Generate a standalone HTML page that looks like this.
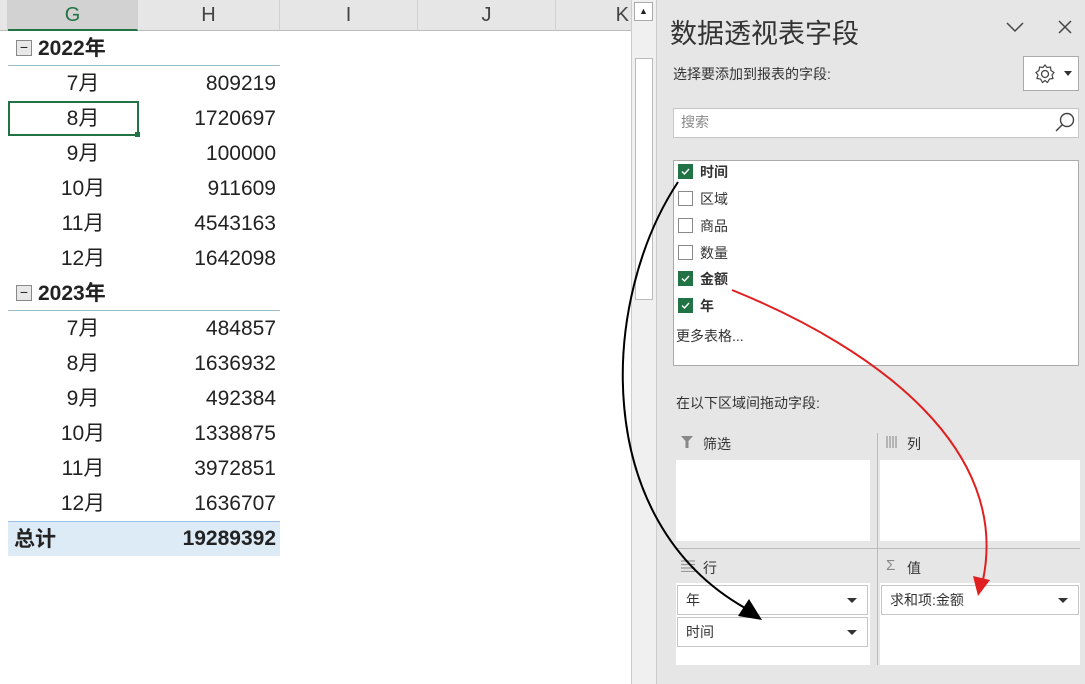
<!DOCTYPE html>
<html><head><meta charset="utf-8"><style>
*{box-sizing:border-box;margin:0;padding:0}
body{width:1085px;height:684px;position:relative;overflow:hidden;background:#fff;font-family:"Liberation Sans","Noto Sans CJK SC",sans-serif;color:#222}
.a{position:absolute}
.hdr{top:0;height:31px;background:#e6e6e6;border-bottom:1px solid #bdbdbd;font-size:20px;color:#444;text-align:center;line-height:31px;border-right:1px solid #d0d0d0}
.r{position:absolute;height:35px;line-height:35px;font-size:21px;color:#222}
.m{left:8px;width:130px;text-align:center;padding-left:20px}
.v{left:138px;width:138px;text-align:right}
.pane{left:657px;top:0;width:428px;height:684px;background:#e6e6e6}
.cb{position:absolute;left:678px;width:15px;height:15px;border:1px solid #8a8a8a;background:#fff}
.ck{background:#217346;border-color:#217346}
.fl{position:absolute;left:700px;font-size:14px;color:#333}
.box{position:absolute;background:#fff}
.it{position:absolute;background:#fff;border:1px solid #c6c6c6;font-size:14px;line-height:28px;padding-left:8px;color:#333}
.tri{position:absolute;right:10px;top:12px;border-left:5px solid transparent;border-right:5px solid transparent;border-top:5px solid #333}
</style></head><body>
<div class="a hdr" style="left:0;width:8px"></div>
<div class="a hdr" style="left:8px;width:130px;color:#217346;border-bottom:2px solid #217346;background:#d2d2d2">G</div>
<div class="a hdr" style="left:138px;width:142px">H</div>
<div class="a hdr" style="left:280px;width:138px">I</div>
<div class="a hdr" style="left:418px;width:138px">J</div>
<div class="a hdr" style="left:556px;width:76px;text-align:right;padding-right:2px">K</div>

<div class="r" style="left:8px;top:31px;width:272px;font-weight:bold;border-bottom:1px solid #9bbdc8;padding-left:30px">2022年</div>
<div class="a" style="left:16px;top:40px;width:16px;height:16px;border:1px solid #888;background:#e8e8e8;font-size:14px;line-height:12px;text-align:center">−</div>
<div class="r m" style="top:66px">7月</div><div class="r v" style="top:66px">809219</div>
<div class="r m" style="top:101px">8月</div><div class="r v" style="top:101px">1720697</div>
<div class="a" style="left:8px;top:101px;width:131px;height:35px;border:2px solid #217346"></div>
<div class="a" style="left:135px;top:132px;width:5px;height:5px;background:#217346"></div>
<div class="r m" style="top:136px">9月</div><div class="r v" style="top:136px">100000</div>
<div class="r m" style="top:171px">10月</div><div class="r v" style="top:171px">911609</div>
<div class="r m" style="top:206px">11月</div><div class="r v" style="top:206px">4543163</div>
<div class="r m" style="top:241px">12月</div><div class="r v" style="top:241px">1642098</div>
<div class="r" style="left:8px;top:276px;width:272px;font-weight:bold;border-bottom:1px solid #9bbdc8;padding-left:30px">2023年</div>
<div class="a" style="left:16px;top:285px;width:16px;height:16px;border:1px solid #888;background:#e8e8e8;font-size:14px;line-height:12px;text-align:center">−</div>
<div class="r m" style="top:311px">7月</div><div class="r v" style="top:311px">484857</div>
<div class="r m" style="top:346px">8月</div><div class="r v" style="top:346px">1636932</div>
<div class="r m" style="top:381px">9月</div><div class="r v" style="top:381px">492384</div>
<div class="r m" style="top:416px">10月</div><div class="r v" style="top:416px">1338875</div>
<div class="r m" style="top:451px">11月</div><div class="r v" style="top:451px">3972851</div>
<div class="r m" style="top:486px">12月</div><div class="r v" style="top:486px">1636707</div>
<div class="r" style="left:8px;top:521px;width:272px;background:#ddebf7;font-weight:bold;border-top:1px solid #9bc2e6;padding-left:6px">总计</div>
<div class="r v" style="top:521px;font-weight:bold">19289392</div>

<div class="a" style="left:631px;top:0;width:26px;height:684px;background:#f0f0f0;border-left:1px solid #ccc;border-right:1px solid #ccc"></div>
<div class="a" style="left:634px;top:2px;width:19px;height:19px;background:#fff;border:1px solid #aaa;font-size:9px;text-align:center;line-height:17px">▲</div>
<div class="a" style="left:635px;top:58px;width:18px;height:242px;background:#fff;border:1px solid #bbb"></div>

<div class="a pane"></div>
<div class="a" style="left:670px;top:12px;font-size:27px;color:#333">数据透视表字段</div>
<svg class="a" style="left:1005px;top:20px" width="20" height="14"><path d="M2 3 L10 11 L18 3" stroke="#444" stroke-width="1.5" fill="none"/></svg>
<svg class="a" style="left:1058px;top:20px" width="14" height="14"><path d="M1 1 L13 13 M13 1 L1 13" stroke="#444" stroke-width="1.5"/></svg>
<div class="a" style="left:673px;top:64px;font-size:14px;color:#333">选择要添加到报表的字段:</div>
<div class="a" style="left:1023px;top:56px;width:56px;height:35px;background:#fff;border:1px solid #aaa"></div>
<svg class="a" style="left:1034px;top:63px" width="22" height="22"><circle cx="11" cy="11" r="3.5" stroke="#444" fill="none" stroke-width="1.3"/><path d="M11 2 L13 4.5 L16.5 4 L17 7.5 L20 9.5 L18 12 L19 15.5 L15.5 16 L13.5 19.5 L11 17.5 L8.5 19.5 L6.5 16 L3 15.5 L4 12 L2 9.5 L5 7.5 L5.5 4 L9 4.5 Z" stroke="#444" fill="none" stroke-width="1.2"/></svg>
<div class="a" style="left:1064px;top:71px;border-left:4px solid transparent;border-right:4px solid transparent;border-top:5px solid #333"></div>
<div class="a" style="left:673px;top:108px;width:406px;height:30px;background:#fff;border:1px solid #c6c6c6;font-size:14px;color:#888;padding-left:7px;line-height:27px">搜索</div>
<svg class="a" style="left:1053px;top:111px" width="24" height="24"><circle cx="14" cy="9" r="6.5" stroke="#444" fill="none" stroke-width="1.4"/><path d="M9.5 13.5 L3 20" stroke="#444" stroke-width="1.5"/></svg>

<div class="a" style="left:673px;top:160px;width:406px;height:206px;background:#fff;border:1px solid #aaa"></div>
<div class="cb ck" style="top:164px"></div><div class="fl" style="top:162px;font-weight:bold">时间</div>
<div class="cb" style="top:191px"></div><div class="fl" style="top:189px">区域</div>
<div class="cb" style="top:218px"></div><div class="fl" style="top:216px">商品</div>
<div class="cb" style="top:245px"></div><div class="fl" style="top:243px">数量</div>
<div class="cb ck" style="top:271px"></div><div class="fl" style="top:269px;font-weight:bold">金额</div>
<div class="cb ck" style="top:298px"></div><div class="fl" style="top:296px;font-weight:bold">年</div>
<svg class="a" style="left:678px;top:164px" width="15" height="150"><g stroke="#fff" stroke-width="1.4" fill="none"><path d="M4 7.5 L6.5 10 L11 5"/><path d="M4 114.5 L6.5 117 L11 112"/><path d="M4 141.5 L6.5 144 L11 139"/></g></svg>
<div class="a" style="left:676px;top:326px;font-size:14px;color:#333">更多表格...</div>

<div class="a" style="left:676px;top:393px;font-size:14px;color:#333">在以下区域间拖动字段:</div>
<svg class="a" style="left:680px;top:435px" width="14" height="14"><path d="M1 1 H13 L8.5 6 V13 H5.5 V6 Z" fill="#888"/></svg>
<div class="a" style="left:703px;top:434px;font-size:14px;color:#333">筛选</div>
<svg class="a" style="left:886px;top:436px" width="12" height="12"><path d="M1 0V12M4 0V12M7 0V12M10 0V12" stroke="#999" stroke-width="1.3"/></svg>
<div class="a" style="left:907px;top:434px;font-size:14px;color:#333">列</div>
<div class="box" style="left:676px;top:460px;width:194px;height:81px"></div>
<div class="box" style="left:880px;top:460px;width:200px;height:81px"></div>
<div class="a" style="left:877px;top:433px;width:1px;height:232px;background:#bbb"></div>
<div class="a" style="left:676px;top:548px;width:404px;height:1px;background:#bbb"></div>
<svg class="a" style="left:681px;top:560px" width="14" height="12"><path d="M0 1H14M0 4.5H14M0 8H14M0 11.5H14" stroke="#999" stroke-width="1.3"/></svg>
<div class="a" style="left:703px;top:558px;font-size:14px;color:#333">行</div>
<div class="a" style="left:886px;top:557px;font-size:15px;color:#888">Σ</div>
<div class="a" style="left:907px;top:558px;font-size:14px;color:#333">值</div>
<div class="box" style="left:676px;top:583px;width:194px;height:82px"></div>
<div class="box" style="left:880px;top:583px;width:200px;height:82px"></div>
<div class="it" style="left:677px;top:585px;width:191px;height:30px">年<div class="tri"></div></div>
<div class="it" style="left:677px;top:617px;width:191px;height:30px">时间<div class="tri"></div></div>
<div class="it" style="left:881px;top:585px;width:198px;height:30px">求和项:金额<div class="tri"></div></div>

<svg class="a" style="left:0;top:0" width="1085" height="684">
<path d="M678 182 C600 300 590 520 745 608" stroke="#000" stroke-width="2" fill="none"/>
<path d="M762 620 L738 616 L749 599 Z" fill="#000"/>
<path d="M732 290 C880 350 1010 450 983 580" stroke="#e02020" stroke-width="2" fill="none"/>
<path d="M978 596 L973 576 L990 580 Z" fill="#e02020"/>
</svg>
</body></html>
